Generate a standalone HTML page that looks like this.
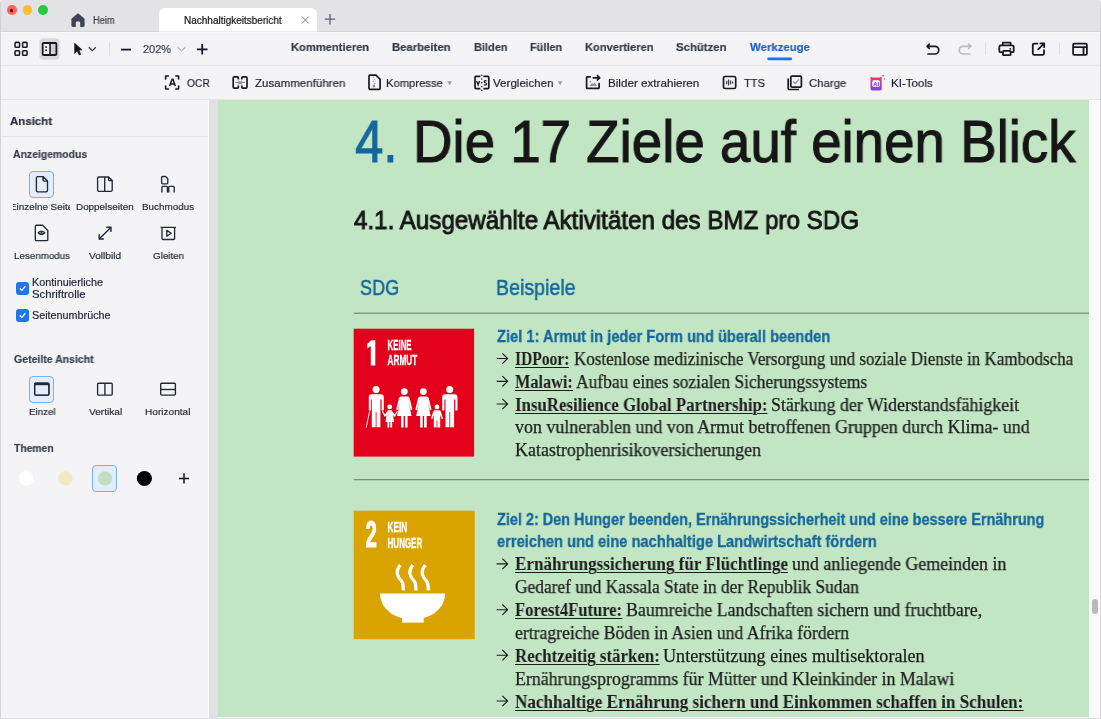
<!DOCTYPE html>
<html><head><meta charset="utf-8">
<style>
*{margin:0;padding:0;box-sizing:border-box}
html,body{width:1101px;height:719px;overflow:hidden;background:#fff}
body{position:relative;font-family:"Liberation Sans",sans-serif;color:#1d2030}
.a{position:absolute}
.t{position:absolute;white-space:nowrap;line-height:1;will-change:transform}
svg{position:absolute;overflow:visible}
</style></head><body>
<!-- window base -->
<div class="a" style="left:0;top:0;width:1101px;height:719px;background:#f4f4f7;border-radius:4px 4px 6px 6px;border:1px solid #d2d2d5;border-top:0"></div>
<!-- title bar -->
<div class="a" style="left:1px;top:0;width:1099px;height:32px;background:#e3e3e6;border-radius:3px 3px 0 0"></div>

<!-- traffic lights -->
<div class="a" style="left:6.9px;top:5.4px;width:9.8px;height:9.8px;border-radius:50%;background:#fe5f57"></div>
<div class="a" style="left:10.3px;top:8.8px;width:3px;height:3px;border-radius:50%;background:#4a0000"></div>
<div class="a" style="left:22.7px;top:5.4px;width:9.8px;height:9.8px;border-radius:50%;background:#febc2e"></div>
<div class="a" style="left:38.3px;top:5.4px;width:9.8px;height:9.8px;border-radius:50%;background:#28c840"></div>
<!-- tabs -->
<svg style="left:70px;top:12px" width="16" height="16" viewBox="0 0 16 16"><path d="M8 1.2 L14.6 6.8 V13.6 Q14.6 15 13.2 15 H10.2 V10.6 Q10.2 9.4 9 9.4 H7 Q5.8 9.4 5.8 10.6 V15 H2.8 Q1.4 15 1.4 13.6 V6.8 Z" fill="#3d4352"/></svg>
<div class="a" style="left:158.5px;top:8px;width:158.5px;height:23.5px;background:#fff;border-radius:6px 6px 0 0"></div>
<div class="a" style="left:1px;top:31.3px;width:1099px;height:1.1px;background:#d6d6da"></div>
<div class="a" style="left:158.5px;top:31.3px;width:158.5px;height:1.1px;background:#ebebed"></div>
<div class="a" style="left:1px;top:32.4px;width:1099px;height:1px;background:#f9f9fb"></div>
<svg style="left:0;top:0" width="1101" height="100" viewBox="0 0 1101 100">
 <path d="M302 16.6 L308.8 23.4 M308.8 16.6 L302 23.4" stroke="#7a7a7a" stroke-width="1"/>
 <path d="M330 14 V24.5 M324.8 19.2 H335.2" stroke="#5b6078" stroke-width="1.3"/>
 <!-- toolbar 1 icons -->
 <g fill="none" stroke="#1a1d29" stroke-width="1.55">
  <rect x="15.08" y="42.38" width="4.45" height="4.95" rx="0.8"/>
  <rect x="22.58" y="42.38" width="4.45" height="4.95" rx="0.8"/>
  <rect x="15.08" y="50.78" width="4.45" height="4.55" rx="0.8"/>
  <rect x="22.58" y="50.78" width="4.45" height="4.55" rx="0.8"/>
 </g>
 <rect x="39.4" y="38.2" width="20.1" height="21.5" rx="4" fill="#d9d9dd"/>
 <rect x="50" y="43" width="6.4" height="12" fill="#d0d0d3"/>
 <rect x="42.7" y="43" width="7" height="12" fill="#f2f2f3"/>
 <rect x="42.7" y="43" width="13.7" height="12" rx="1" fill="none" stroke="#161925" stroke-width="1.8"/>
 <path d="M50 43 V55" stroke="#161925" stroke-width="1.6"/>
 <rect x="45.2" y="46.3" width="1.8" height="1.5" fill="#161925"/>
 <rect x="45.2" y="49.5" width="1.8" height="1.5" fill="#161925"/>
 <path d="M74.6 43.2 L74.6 53.3 L77.1 51 L79.1 55 L80.8 54.2 L78.9 50.3 L82.1 49.8 Z" fill="#141722" stroke="#141722" stroke-width="0.6" stroke-linejoin="round"/>
 <path d="M88.8 47.3 L92.3 50.6 L95.8 47.3" fill="none" stroke="#2f3342" stroke-width="1.3"/>
 <path d="M109.6 42.5 V55.6" stroke="#dcdce0" stroke-width="1"/>
 <path d="M121 49.6 H131" stroke="#161925" stroke-width="1.8"/>
 <path d="M177.6 47.2 L181.5 50.9 L185.4 47.2" fill="none" stroke="#8b8f9a" stroke-width="1"/>
 <path d="M202.2 44 V54.6 M196.9 49.3 H207.5" stroke="#161925" stroke-width="1.8"/>
 <!-- nav underline -->
 <rect x="767.2" y="57.4" width="25" height="2.8" rx="1.4" fill="#1c6ef2"/>
 <!-- right icons -->
 <g fill="none" stroke="#161925" stroke-width="1.7" stroke-linecap="round" stroke-linejoin="round">
  <path d="M929.3 44.2 L927.1 46.3 L929.3 48.5 M927.3 46.3 H934.9 A3.85 3.85 0 0 1 934.9 54 H928"/>
 </g>
 <g fill="none" stroke="#b9bcc3" stroke-width="1.7" stroke-linecap="round" stroke-linejoin="round">
  <path d="M968.7 44.2 L970.9 46.3 L968.7 48.5 M970.7 46.3 H963.1 A3.85 3.85 0 0 0 963.1 54 H970"/>
 </g>
 <path d="M985.5 43 V55" stroke="#e0e0e3" stroke-width="1"/>
 <g fill="none" stroke="#161925" stroke-width="1.8" stroke-linejoin="round">
  <path d="M1002.8 45.3 V42.7 H1010.6 V45.3"/>
  <path d="M1002.4 52.2 H1000.6 Q999.3 52.2 999.3 50.9 V47 Q999.3 45.4 1000.9 45.4 H1012.1 Q1013.7 45.4 1013.7 47 V50.9 Q1013.7 52.2 1012.4 52.2 H1010.8"/>
  <rect x="1003" y="50.9" width="7.6" height="4.3" rx="0.6"/>
 </g>
 <circle cx="1010.2" cy="48.8" r="0.9" fill="#161925"/>
 <g fill="none" stroke="#161925" stroke-width="1.8" stroke-linecap="round" stroke-linejoin="round">
  <path d="M1037.4 43.6 H1034 Q1032.8 43.6 1032.8 44.8 V53.6 Q1032.8 54.8 1034 54.8 H1042.8 Q1044 54.8 1044 53.6 V50.2"/>
  <path d="M1038.2 49.4 L1044.2 43.4 M1040.4 43.4 H1044.2 V47.2"/>
 </g>
 <path d="M1059.5 43 V55" stroke="#e0e0e3" stroke-width="1"/>
 <g fill="none" stroke="#161925" stroke-width="1.8" stroke-linejoin="round">
  <rect x="1073.1" y="43.7" width="13.8" height="11.1" rx="1.3"/>
  <path d="M1073.1 47.2 H1086.9 M1083.5 47.2 V54.8"/>
 </g>
 <!-- toolbar 2 icons -->
 <g fill="none" stroke="#161925" stroke-width="1.6" stroke-linecap="round">
  <path d="M165.6 79 V76.4 Q165.6 76 166 76 H168.4"/>
  <path d="M175.8 76 H178.2 Q178.6 76 178.6 76.4 V79"/>
  <path d="M165.6 86 V88.6 Q165.6 89 166 89 H168.4"/>
  <path d="M175.8 89 H178.2 Q178.6 89 178.6 88.6 V86"/>
 </g>
 <path d="M169.6 86 L172.1 79.3 H172.9 L175.3 86 M170.5 84 H174.4" fill="none" stroke="#161925" stroke-width="1.5"/>
 <g fill="none" stroke="#161925" stroke-width="1.7" stroke-linejoin="round">
  <path d="M238.4 79.6 V78 Q238.4 76.9 237.3 76.9 H234.4 Q233.2 76.9 233.2 78.1 V86.9 Q233.2 88.1 234.4 88.1 H237.3 Q238.4 88.1 238.4 87 V85.4"/>
  <path d="M241.8 79.6 V78 Q241.8 76.9 242.9 76.9 H245.8 Q247 76.9 247 78.1 V86.9 Q247 88.1 245.8 88.1 H242.9 Q241.8 88.1 241.8 87 V85.4"/>
 </g>
 <path d="M235.2 82.5 H245 M238.2 80.6 L240 82.5 L238.2 84.4 M242 80.6 L240.2 82.5 L242 84.4" fill="none" stroke="#8e9099" stroke-width="1.2"/>
 <g fill="none" stroke="#161925" stroke-width="1.7" stroke-linejoin="round">
  <path d="M369 75.2 H376 L380.1 79.3 V88.2 Q380.1 89.3 379 89.3 H370.1 Q369 89.3 369 88.2 V76.3 Q369 75.2 370.1 75.2"/>
 </g>
 <path d="M373.2 76.5 V77.7 M374.4 78.7 V79.9 M373.2 80.9 V82.1 M374.4 83.1 V84.3" stroke="#8e9099" stroke-width="1"/>
 <rect x="372.6" y="84.8" width="2.4" height="2.6" fill="#8e9099"/>
 <path d="M447.2 81.3 H452 L449.6 85.2 Z" fill="#9a9da5"/>
 <path d="M557.8 81.3 H562.6 L560.2 85.2 Z" fill="#9a9da5"/>
 <g fill="none" stroke="#161925" stroke-width="1.7" stroke-linejoin="round">
  <path d="M480.4 76.4 H476 Q475 76.4 475 77.4 V87.6 Q475 88.6 476 88.6 H480.4"/>
  <path d="M483.4 76.4 H487.8 Q488.8 76.4 488.8 77.4 V87.6 Q488.8 88.6 487.8 88.6 H483.4"/>
 </g>
 <path d="M481.8 75.2 V90.6" stroke="#161925" stroke-width="1.5" stroke-linecap="round" stroke-dasharray="0.01 3.75"/>
 <path d="M476.6 81 L478.1 84.9 L479.6 81" fill="none" stroke="#161925" stroke-width="1.3"/>
 <path d="M486.4 81.3 Q486 80.6 485.2 80.6 Q484.2 80.6 484.2 81.6 Q484.2 82.4 485.3 82.8 Q486.5 83.2 486.5 84.1 Q486.5 85.2 485.3 85.2 Q484.4 85.2 484 84.5" fill="none" stroke="#161925" stroke-width="1.2"/>
 <g fill="none" stroke="#161925" stroke-width="1.7" stroke-linecap="round" stroke-linejoin="round">
  <path d="M590.3 76.8 H587.3 Q586.6 76.8 586.6 77.5 V87.7 Q586.6 88.4 587.3 88.4 H598.4 Q599.1 88.4 599.1 87.7 V83.6"/>
  <path d="M593.3 77.8 H599.6 M597.4 75.6 L599.7 77.8 L597.4 80"/>
 </g>
 <path d="M589.5 86 L592 83 L593.4 84.3 L594.7 82.2 L597 86 Z" fill="#8e9099"/>
 <circle cx="590.2" cy="81.6" r="0.8" fill="#8e9099"/>
 <rect x="723.5" y="76.5" width="12.2" height="12" rx="1.6" fill="none" stroke="#161925" stroke-width="1.7"/>
 <path d="M726.8 80.8 V84.2 M728.6 79.6 V85.6 M730.6 80.6 V84.4 M732.6 81.6 V83.6" stroke="#3a3d48" stroke-width="1.2"/>
 <g fill="none" stroke="#161925" stroke-width="1.7" stroke-linejoin="round">
  <path d="M788.2 78.6 V88.4 Q788.2 89.5 789.3 89.5 H799.1"/>
  <rect x="790.8" y="76.1" width="10.6" height="11" rx="1.2"/>
 </g>
 <path d="M793.2 81.5 L795.2 83.6 L799 79.4" fill="none" stroke="#8e9099" stroke-width="1.2"/>
 <defs><linearGradient id="aig" x1="0" y1="0" x2="0" y2="1"><stop offset="0" stop-color="#f43a56"/><stop offset="1" stop-color="#7a3ff6"/></linearGradient></defs>
 <path d="M870.5 77.4 Q870.5 76.8 871.2 76.8 L872.6 77.6 H879.6 L881 76.8 Q881.7 76.8 881.7 77.4 V88.8 Q881.7 90.6 879.9 90.6 H872.3 Q870.5 90.6 870.5 88.8 Z" fill="url(#aig)"/>
 <rect x="872.3" y="80.2" width="7.6" height="6.6" rx="1.6" fill="#fff"/>
 <text x="873" y="85.8" font-family="Liberation Sans" font-weight="700" font-size="5.6" fill="#5a2fd4" textLength="6.2" lengthAdjust="spacingAndGlyphs">AI</text>
 <circle cx="883.2" cy="75.6" r="0.9" fill="#f2456a"/>
 <circle cx="884.4" cy="78.9" r="0.6" fill="#8a54f0"/>
</svg>

<!-- toolbar borders -->
<div class="a" style="left:1px;top:65px;width:1099px;height:1px;background:#e6e6ea"></div>
<div class="a" style="left:1px;top:98.8px;width:1099px;height:1px;background:#e4e4e8"></div>

<!-- sidebar -->
<div class="a" style="left:1px;top:99.8px;width:208px;height:618px;background:#f4f4f7"></div>
<div class="a" style="left:208px;top:99.8px;width:1px;height:618px;background:#fbfbfd"></div>
<div class="a" style="left:1px;top:136px;width:207px;height:1px;background:#e3e3e7"></div>
<div class="a" style="left:29.1px;top:170.9px;width:25.1px;height:26.7px;border-radius:4px;background:#e3eefc;border:1.4px solid #74b1f7"></div>
<div class="a" style="left:29.2px;top:376px;width:25.1px;height:26.5px;border-radius:4px;background:#e3eefc;border:1.4px solid #74b1f7"></div>
<div class="a" style="left:92.3px;top:465px;width:25.2px;height:26.7px;border-radius:4px;background:#e3eefc;border:1.4px solid #74b1f7"></div>
<!-- checkboxes -->
<div class="a" style="left:16.3px;top:281.8px;width:12.6px;height:13.2px;border-radius:3px;background:#1f75ee"></div>
<div class="a" style="left:16.3px;top:308.6px;width:12.6px;height:13.4px;border-radius:3px;background:#1f75ee"></div>
<svg style="left:0;top:99px" width="209" height="619" viewBox="0 99 209 619">
 <path d="M20.1 288.6 L21.9 290.4 L25.1 286.6 M20.1 315.5 L21.9 317.3 L25.1 313.5" fill="none" stroke="#fff" stroke-width="1.25" stroke-linecap="round" stroke-linejoin="round"/>
 <g fill="none" stroke="#242836" stroke-width="1.35" stroke-linejoin="round">
  <!-- single page -->
  <path d="M37.7 176.6 H43 L47.5 181.1 V190.6 Q47.5 191.9 46.2 191.9 H37.7 Q36.4 191.9 36.4 190.6 V177.9 Q36.4 176.6 37.7 176.6 Z M43 176.6 V179.8 Q43 181.1 44.3 181.1 H47.5"/>
  <!-- double page -->
  <path d="M98.9 177 H108.6 L112.2 180.6 V190 Q112.2 191.3 110.9 191.3 H98.9 Q97.6 191.3 97.6 190 V178.3 Q97.6 177 98.9 177 Z M104.7 177 V191.3 M108.6 177 V179.4 Q108.6 180.6 109.8 180.6 H112.2"/>
  <!-- book mode -->
  <path d="M162.6 176.5 H165.6 L167.8 178.7 V182.8 Q167.8 183.8 166.8 183.8 H162.6 Q161.6 183.8 161.6 182.8 V177.5 Q161.6 176.5 162.6 176.5 Z"/>
  <path d="M161.9 192.6 V187.2 Q161.9 186.3 162.8 186.3 H166.5 Q167.4 186.3 167.4 187.2 V192.6 M168.7 192.6 V187.2 Q168.7 186.3 169.6 186.3 H173.3 Q174.2 186.3 174.2 187.2 V192.6"/>
  <!-- reading mode -->
  <path d="M36.5 225.2 H42.6 L47.8 230.4 V239.4 Q47.8 240.6 46.6 240.6 H36.5 Q35.3 240.6 35.3 239.4 V226.4 Q35.3 225.2 36.5 225.2 Z"/>
  <path d="M38.2 232.8 Q41.5 229.4 44.8 232.8 Q41.5 236.2 38.2 232.8 Z"/>
  <!-- full screen -->
  <path d="M99.4 238.8 L110.8 227.4 M99.2 234.8 V239 H103.4 M106.8 227.2 H111 V231.4" stroke-width="1.4" stroke-linecap="round"/>
  <!-- slide -->
  <path d="M160.6 227.3 H176 M162 227.3 V238.4 Q162 239.5 163.1 239.5 H173.5 Q174.6 239.5 174.6 238.4 V227.3"/>
  <path d="M166.8 230.4 V236.2 L171.2 233.3 Z"/>
  <!-- split: single -->
  <rect x="34.7" y="383.2" width="14.2" height="11.9" rx="1"/>
  <path d="M34.7 384.6 H48.9" stroke-width="2.2"/>
  <!-- split vertical -->
  <rect x="97.6" y="383.2" width="14.6" height="11.9" rx="1"/>
  <path d="M104.9 383.2 V395.1"/>
  <!-- split horizontal -->
  <rect x="160.7" y="383.2" width="14.7" height="11.9" rx="1"/>
  <path d="M160.7 389.5 H175.4"/>
 </g>
 <circle cx="41.5" cy="232.8" r="1.1" fill="#242836"/>
 <rect x="35.4" y="384.4" width="12.8" height="10" fill="#e3eefc" />
 <path d="M34.7 384.2 H48.9" stroke="#242836" stroke-width="2"/>
 <rect x="34.7" y="383.2" width="14.2" height="11.9" rx="1" fill="none" stroke="#242836" stroke-width="1.35"/>
 <!-- themes -->
 <circle cx="26.1" cy="478.5" r="7.2" fill="#ffffff"/>
 <circle cx="65.4" cy="478.5" r="7.2" fill="#f2e8c4"/>
 <circle cx="105.1" cy="478.5" r="7.2" fill="#c4ddc2"/>
 <circle cx="144.4" cy="478.5" r="7.6" fill="#000"/>
 <path d="M184 473.4 V483.6 M178.9 478.5 H189.1" stroke="#111" stroke-width="1.5"/>
</svg>
<div class="a" style="left:13px;top:200px;width:57px;height:14px;overflow:hidden"><div class="t" style="left:-3.2px;top:1.6px;font-size:9.9px;color:#2a2e38;-webkit-text-stroke:0.2px #2a2e38">Einzelne Seite</div></div>

<!-- page area -->
<div class="a" style="left:209px;top:99.8px;width:9px;height:618px;background:#e1e1e4"></div>
<div class="a" style="left:218px;top:99.8px;width:871px;height:617.7px;background:#c2e5c4"></div>
<div class="a" style="left:1089px;top:99.8px;width:11px;height:618px;background:#fafafb"></div>
<div class="a" style="left:1100px;top:99.8px;width:1px;height:618px;background:#dadadc"></div>
<div class="a" style="left:1091.8px;top:598.8px;width:6px;height:15px;border-radius:3px;background:#b9b9bb"></div>
<div class="a" style="left:0;top:717.5px;width:1101px;height:1.5px;background:#e0e0e2"></div>
<div class="a" style="left:0;top:99px;width:1px;height:619px;background:#d4d4d6"></div>

<!-- document graphics -->
<svg style="left:0;top:0" width="1101" height="719" viewBox="0 0 1101 719">
 <rect x="353.8" y="312.6" width="735.2" height="1.3" fill="#7d8d85"/>
 <rect x="353.8" y="479" width="735.2" height="1.3" fill="#7d8d85"/>
 <rect x="353.7" y="328.7" width="120.4" height="127.9" fill="#e3001b"/>
 <rect x="353.7" y="510.7" width="121" height="128.5" fill="#d9a300"/>
 <g fill="#fff" font-family="Liberation Sans" font-weight="700" stroke="#fff" stroke-width="0.35">
  
  <text x="387.6" y="350.3" font-size="14.6" textLength="24" lengthAdjust="spacingAndGlyphs">KEINE</text>
  <text x="387.6" y="364.8" font-size="14.6" textLength="29.6" lengthAdjust="spacingAndGlyphs">ARMUT</text>
  <text x="365.4" y="547.4" font-size="36" textLength="11.4" lengthAdjust="spacingAndGlyphs" stroke="#fff" stroke-width="0.9">2</text>
  <text x="387.6" y="532.3" font-size="14.6" textLength="19.6" lengthAdjust="spacingAndGlyphs">KEIN</text>
  <text x="387.6" y="547.8" font-size="14.6" textLength="34.6" lengthAdjust="spacingAndGlyphs">HUNGER</text>
 </g>
 <path d="M367.2 344 L371.2 340.2 H375.3 V365.4 H370.8 V346 L367.2 348.4 Z" fill="#fff"/>
 <!-- SDG1 people -->
 <g transform="translate(362 380)" fill="#fff">
  <circle cx="14.1" cy="9.6" r="3.5"/>
  <path d="M9.2 14.3 H19 Q21.8 14.3 21.8 17.2 V30.4 H19.6 V19.6 H18.4 V47.2 H14.5 V32 H13.7 V47.2 H9.8 V19.6 H8.9 V30.4 H6.8 V17.2 Q6.8 14.3 9.2 14.3 Z"/>
  <path d="M7.6 31 L4.2 47.6" stroke="#fff" stroke-width="0.9"/>
  <circle cx="27.7" cy="26.9" r="2.4"/>
  <path d="M25.9 30.2 H29.5 L32.6 34.5 L34.8 31 L35.8 31.6 L32.8 37 L31.2 35 L32 42 H30.2 V47.5 H28.3 V42 H27.3 V47.5 H25.4 V42 H23.6 L24.4 35 L22.8 37 L19.8 31.6 L20.8 31 L23 34.5 Z"/>
  <circle cx="42.3" cy="11.6" r="3.4"/>
  <path d="M39 16.4 H45.6 Q47 16.4 47.6 18 L50.4 29.6 L48.8 30.2 L46.4 21.6 L49.6 36 H45.6 V47.5 H43 V36 H41.6 V47.5 H39 V36 H35 L38.2 21.6 L35.8 30.2 L34.2 29.6 L37 18 Q37.6 16.4 39 16.4 Z"/>
  <g transform="translate(19.1 0)"><circle cx="42.3" cy="11.6" r="3.4"/>
  <path d="M39 16.4 H45.6 Q47 16.4 47.6 18 L50.4 29.6 L48.8 30.2 L46.4 21.6 L49.6 36 H45.6 V47.5 H43 V36 H41.6 V47.5 H39 V36 H35 L38.2 21.6 L35.8 30.2 L34.2 29.6 L37 18 Q37.6 16.4 39 16.4 Z"/></g>
  <circle cx="75" cy="26.9" r="2.4"/>
  <path d="M73 30.3 H77 Q78.2 30.3 78.8 31.6 L81 38.8 L79.8 39.3 L78.2 35 V47.5 H75.4 V40.6 H74.6 V47.5 H71.8 V35 L70.2 39.3 L69 38.8 L71.2 31.6 Q71.8 30.3 73 30.3 Z"/>
  <circle cx="87.7" cy="9.6" r="3.5"/>
  <path d="M82.8 14.3 H92.6 Q95.5 14.3 95.5 17.2 V30.4 H93.3 V19.6 H92.1 V47.2 H88.2 V32 H87.4 V47.2 H83.5 V19.6 H82.4 V30.4 H80.2 V17.2 Q80.2 14.3 82.8 14.3 Z"/>
 </g>
 <!-- SDG2 bowl -->
 <g fill="none" stroke="#fff" stroke-width="3.3" stroke-linecap="butt">
  <path d="M400.3 565.2 Q396.6 569.5 397.4 574 Q398.2 577.6 401.2 580.6 Q403.6 583.8 403.2 590.4"/>
  <path d="M412.9 565.2 Q409.2 569.5 410 574 Q410.8 577.6 413.8 580.6 Q416.2 583.8 415.8 590.4"/>
  <path d="M425.3 565.2 Q421.6 569.5 422.4 574 Q423.2 577.6 426.2 580.6 Q428.6 583.8 428.2 590.4"/>
 </g>
 <path d="M379.9 593.6 H445.2 Q444.8 606 434 613.6 Q425.5 619.2 412.6 619.4 Q399.5 619.2 391.2 613.6 Q380.3 606 379.9 593.6 Z" fill="#fff"/>
 <rect x="402" y="618" width="21.7" height="4.6" fill="#fff"/>
 <!-- arrows -->
 <g fill="none" stroke="#1b1b1b" stroke-width="1.15">
  <path d="M496.6 358.5 H507.6 M502.4 353.3 L507.6 358.5 L502.4 363.7"/>
  <path d="M496.6 381.3 H507.6 M502.4 376.1 L507.6 381.3 L502.4 386.5"/>
  <path d="M496.6 404 H507.6 M502.4 398.8 L507.6 404 L502.4 409.2"/>
  <path d="M496.6 563.9 H507.6 M502.4 558.7 L507.6 563.9 L502.4 569.1"/>
  <path d="M496.6 609.7 H507.6 M502.4 604.5 L507.6 609.7 L502.4 614.9"/>
  <path d="M496.6 655.2 H507.6 M502.4 650 L507.6 655.2 L502.4 660.4"/>
  <path d="M496.6 701 H507.6 M502.4 695.8 L507.6 701 L502.4 706.2"/>
 </g>
</svg>
<div class="t" style="left:92.5px;top:15.60px;font-family:'Liberation Sans',sans-serif;font-size:10px;font-weight:400;color:#3a3f4e;transform:scaleX(0.9253);transform-origin:0 0;-webkit-text-stroke:0.2px #3a3f4e;">Heim</div>
<div class="t" style="left:184px;top:15.60px;font-family:'Liberation Sans',sans-serif;font-size:10px;font-weight:400;color:#111;transform:scaleX(0.9977);transform-origin:0 0;-webkit-text-stroke:0.2px #111;">Nachhaltigkeitsbericht</div>
<div class="t" style="left:143px;top:44.40px;font-family:'Liberation Sans',sans-serif;font-size:11px;font-weight:400;color:#3a3f4f;transform:scaleX(0.9950);transform-origin:0 0;-webkit-text-stroke:0.2px #3a3f4f;">202%</div>
<div class="t" style="left:291.3px;top:40.80px;font-family:'Liberation Sans',sans-serif;font-size:11.6px;font-weight:700;color:#343948;transform:scaleX(0.9620);transform-origin:0 0;-webkit-text-stroke:0.2px #343948;">Kommentieren</div>
<div class="t" style="left:392.3px;top:40.80px;font-family:'Liberation Sans',sans-serif;font-size:11.6px;font-weight:700;color:#343948;transform:scaleX(0.9763);transform-origin:0 0;-webkit-text-stroke:0.2px #343948;">Bearbeiten</div>
<div class="t" style="left:473.6px;top:40.80px;font-family:'Liberation Sans',sans-serif;font-size:11.6px;font-weight:700;color:#343948;transform:scaleX(0.9481);transform-origin:0 0;-webkit-text-stroke:0.2px #343948;">Bilden</div>
<div class="t" style="left:529.9px;top:40.80px;font-family:'Liberation Sans',sans-serif;font-size:11.6px;font-weight:700;color:#343948;transform:scaleX(0.9432);transform-origin:0 0;-webkit-text-stroke:0.2px #343948;">Füllen</div>
<div class="t" style="left:585px;top:40.80px;font-family:'Liberation Sans',sans-serif;font-size:11.6px;font-weight:700;color:#343948;transform:scaleX(0.9578);transform-origin:0 0;-webkit-text-stroke:0.2px #343948;">Konvertieren</div>
<div class="t" style="left:676.3px;top:40.80px;font-family:'Liberation Sans',sans-serif;font-size:11.6px;font-weight:700;color:#343948;transform:scaleX(0.9797);transform-origin:0 0;-webkit-text-stroke:0.2px #343948;">Schützen</div>
<div class="t" style="left:750px;top:40.80px;font-family:'Liberation Sans',sans-serif;font-size:11.6px;font-weight:700;color:#1f5fcc;transform:scaleX(0.9820);transform-origin:0 0;-webkit-text-stroke:0.2px #1f5fcc;">Werkzeuge</div>
<div class="t" style="left:186.9px;top:76.80px;font-family:'Liberation Sans',sans-serif;font-size:11.6px;font-weight:400;color:#1d2030;transform:scaleX(0.8849);transform-origin:0 0;-webkit-text-stroke:0.2px #1d2030;">OCR</div>
<div class="t" style="left:254.5px;top:76.80px;font-family:'Liberation Sans',sans-serif;font-size:11.6px;font-weight:400;color:#1d2030;transform:scaleX(0.9938);transform-origin:0 0;-webkit-text-stroke:0.2px #1d2030;">Zusammenführen</div>
<div class="t" style="left:385.9px;top:76.80px;font-family:'Liberation Sans',sans-serif;font-size:11.6px;font-weight:400;color:#1d2030;transform:scaleX(0.9686);transform-origin:0 0;-webkit-text-stroke:0.2px #1d2030;">Kompresse</div>
<div class="t" style="left:493.2px;top:76.80px;font-family:'Liberation Sans',sans-serif;font-size:11.6px;font-weight:400;color:#1d2030;transform:scaleX(0.9968);transform-origin:0 0;-webkit-text-stroke:0.2px #1d2030;">Vergleichen</div>
<div class="t" style="left:608px;top:76.80px;font-family:'Liberation Sans',sans-serif;font-size:11.6px;font-weight:400;color:#1d2030;transform:scaleX(1.0047);transform-origin:0 0;-webkit-text-stroke:0.2px #1d2030;">Bilder extrahieren</div>
<div class="t" style="left:743.8px;top:76.80px;font-family:'Liberation Sans',sans-serif;font-size:11.6px;font-weight:400;color:#1d2030;transform:scaleX(0.9541);transform-origin:0 0;-webkit-text-stroke:0.2px #1d2030;">TTS</div>
<div class="t" style="left:809px;top:76.80px;font-family:'Liberation Sans',sans-serif;font-size:11.6px;font-weight:400;color:#1d2030;transform:scaleX(0.9808);transform-origin:0 0;-webkit-text-stroke:0.2px #1d2030;">Charge</div>
<div class="t" style="left:891.3px;top:76.80px;font-family:'Liberation Sans',sans-serif;font-size:11.6px;font-weight:400;color:#1d2030;transform:scaleX(0.9954);transform-origin:0 0;-webkit-text-stroke:0.2px #1d2030;">KI-Tools</div>
<div class="t" style="left:10.4px;top:115.00px;font-family:'Liberation Sans',sans-serif;font-size:11.6px;font-weight:700;color:#2a2e3b;transform:scaleX(0.9879);transform-origin:0 0;-webkit-text-stroke:0.2px #2a2e3b;">Ansicht</div>
<div class="t" style="left:13.4px;top:149.00px;font-family:'Liberation Sans',sans-serif;font-size:10.6px;font-weight:700;color:#3a3f50;transform:scaleX(0.9848);transform-origin:0 0;-webkit-text-stroke:0.2px #3a3f50;">Anzeigemodus</div>
<div class="t" style="left:76.3px;top:202.00px;font-family:'Liberation Sans',sans-serif;font-size:9.9px;font-weight:400;color:#2a2e38;-webkit-text-stroke:0.2px #2a2e38;">Doppelseiten</div>
<div class="t" style="left:142px;top:202.00px;font-family:'Liberation Sans',sans-serif;font-size:9.9px;font-weight:400;color:#2a2e38;transform:scaleX(0.9970);transform-origin:0 0;-webkit-text-stroke:0.2px #2a2e38;">Buchmodus</div>
<div class="t" style="left:13.6px;top:251.00px;font-family:'Liberation Sans',sans-serif;font-size:9.9px;font-weight:400;color:#2a2e38;transform:scaleX(0.9903);transform-origin:0 0;-webkit-text-stroke:0.2px #2a2e38;">Lesenmodus</div>
<div class="t" style="left:89px;top:251.00px;font-family:'Liberation Sans',sans-serif;font-size:9.9px;font-weight:400;color:#2a2e38;transform:scaleX(1.0225);transform-origin:0 0;-webkit-text-stroke:0.2px #2a2e38;">Vollbild</div>
<div class="t" style="left:152.6px;top:251.00px;font-family:'Liberation Sans',sans-serif;font-size:9.9px;font-weight:400;color:#2a2e38;transform:scaleX(0.9905);transform-origin:0 0;-webkit-text-stroke:0.2px #2a2e38;">Gleiten</div>
<div class="t" style="left:32.4px;top:277.10px;font-family:'Liberation Sans',sans-serif;font-size:10.8px;font-weight:400;color:#23273a;transform:scaleX(1.0024);transform-origin:0 0;-webkit-text-stroke:0.2px #23273a;">Kontinuierliche</div>
<div class="t" style="left:32.4px;top:289.40px;font-family:'Liberation Sans',sans-serif;font-size:10.8px;font-weight:400;color:#23273a;transform:scaleX(1.0487);transform-origin:0 0;-webkit-text-stroke:0.2px #23273a;">Schriftrolle</div>
<div class="t" style="left:32.4px;top:309.80px;font-family:'Liberation Sans',sans-serif;font-size:10.8px;font-weight:400;color:#23273a;-webkit-text-stroke:0.2px #23273a;">Seitenumbrüche</div>
<div class="t" style="left:13.8px;top:353.90px;font-family:'Liberation Sans',sans-serif;font-size:10.6px;font-weight:700;color:#3a3f50;transform:scaleX(0.9917);transform-origin:0 0;-webkit-text-stroke:0.2px #3a3f50;">Geteilte Ansicht</div>
<div class="t" style="left:28.5px;top:407.20px;font-family:'Liberation Sans',sans-serif;font-size:9.9px;font-weight:400;color:#2a2e38;transform:scaleX(0.9849);transform-origin:0 0;-webkit-text-stroke:0.2px #2a2e38;">Einzel</div>
<div class="t" style="left:88.5px;top:407.20px;font-family:'Liberation Sans',sans-serif;font-size:9.9px;font-weight:400;color:#2a2e38;transform:scaleX(1.0250);transform-origin:0 0;-webkit-text-stroke:0.2px #2a2e38;">Vertikal</div>
<div class="t" style="left:145.3px;top:407.20px;font-family:'Liberation Sans',sans-serif;font-size:9.9px;font-weight:400;color:#2a2e38;transform:scaleX(1.0209);transform-origin:0 0;-webkit-text-stroke:0.2px #2a2e38;">Horizontal</div>
<div class="t" style="left:13.8px;top:443.00px;font-family:'Liberation Sans',sans-serif;font-size:10.6px;font-weight:700;color:#3a3f50;transform:scaleX(0.9748);transform-origin:0 0;-webkit-text-stroke:0.2px #3a3f50;">Themen</div>
<div class="t" style="left:355px;top:112.20px;font-family:'Liberation Sans',sans-serif;font-size:60px;font-weight:400;color:#15679b;transform:scaleX(0.8512);transform-origin:0 0;-webkit-text-stroke:1.1px #15679b;">4.</div>
<div class="t" style="left:413.4px;top:112.20px;font-family:'Liberation Sans',sans-serif;font-size:60px;font-weight:400;color:#161616;transform:scaleX(0.9113);transform-origin:0 0;-webkit-text-stroke:1.1px #161616;">Die 17 Ziele auf einen Blick</div>
<div class="t" style="left:354.4px;top:207.10px;font-family:'Liberation Sans',sans-serif;font-size:26.2px;font-weight:400;color:#161616;transform:scaleX(0.9227);transform-origin:0 0;-webkit-text-stroke:0.9px #161616;">4.1. Ausgewählte Aktivitäten des BMZ pro SDG</div>
<div class="t" style="left:359.6px;top:276.10px;font-family:'Liberation Sans',sans-serif;font-size:22.8px;font-weight:400;color:#15679b;transform:scaleX(0.7934);transform-origin:0 0;-webkit-text-stroke:0.5px #15679b;">SDG</div>
<div class="t" style="left:495.5px;top:276.10px;font-family:'Liberation Sans',sans-serif;font-size:22.8px;font-weight:400;color:#15679b;transform:scaleX(0.8604);transform-origin:0 0;-webkit-text-stroke:0.5px #15679b;">Beispiele</div>
<div class="t" style="left:496.8px;top:328.80px;font-family:'Liberation Sans',sans-serif;font-size:16.6px;font-weight:700;color:#15679b;transform:scaleX(0.8831);transform-origin:0 0;-webkit-text-stroke:0.3px #15679b;">Ziel 1: Armut in jeder Form und überall beenden</div>
<div class="t" style="left:514.6px;top:350.00px;font-family:'Liberation Serif',serif;font-size:18px;font-weight:700;color:#1b1b1b;transform:scaleX(0.8637);transform-origin:0 0;"><span style="text-decoration:underline;text-decoration-thickness:1.1px;text-underline-offset:2.2px">IDPoor:</span></div>
<div class="t" style="left:573.8px;top:350.00px;font-family:'Liberation Serif',serif;font-size:18px;font-weight:400;color:#1b1b1b;transform:scaleX(0.9441);transform-origin:0 0;-webkit-text-stroke:0.25px #1b1b1b;">Kostenlose medizinische Versorgung und soziale Dienste in Kambodscha</div>
<div class="t" style="left:514.6px;top:372.80px;font-family:'Liberation Serif',serif;font-size:18px;font-weight:700;color:#1b1b1b;transform:scaleX(0.9033);transform-origin:0 0;"><span style="text-decoration:underline;text-decoration-thickness:1.1px;text-underline-offset:2.2px">Malawi:</span></div>
<div class="t" style="left:576.2px;top:372.80px;font-family:'Liberation Serif',serif;font-size:18px;font-weight:400;color:#1b1b1b;transform:scaleX(0.9689);transform-origin:0 0;-webkit-text-stroke:0.25px #1b1b1b;">Aufbau eines sozialen Sicherungssystems</div>
<div class="t" style="left:514.6px;top:395.50px;font-family:'Liberation Serif',serif;font-size:18px;font-weight:700;color:#1b1b1b;transform:scaleX(0.9351);transform-origin:0 0;"><span style="text-decoration:underline;text-decoration-thickness:1.1px;text-underline-offset:2.2px">InsuResilience Global Partnership:</span></div>
<div class="t" style="left:770.9px;top:395.50px;font-family:'Liberation Serif',serif;font-size:18px;font-weight:400;color:#1b1b1b;transform:scaleX(0.9924);transform-origin:0 0;-webkit-text-stroke:0.25px #1b1b1b;">Stärkung der Widerstandsfähigkeit</div>
<div class="t" style="left:514.6px;top:418.30px;font-family:'Liberation Serif',serif;font-size:18px;font-weight:400;color:#1b1b1b;transform:scaleX(0.9955);transform-origin:0 0;-webkit-text-stroke:0.25px #1b1b1b;">von vulnerablen und von Armut betroffenen Gruppen durch Klima- und</div>
<div class="t" style="left:514.6px;top:441.00px;font-family:'Liberation Serif',serif;font-size:18px;font-weight:400;color:#1b1b1b;transform:scaleX(0.9963);transform-origin:0 0;-webkit-text-stroke:0.25px #1b1b1b;">Katastrophenrisikoversicherungen</div>
<div class="t" style="left:496.8px;top:511.80px;font-family:'Liberation Sans',sans-serif;font-size:16.6px;font-weight:700;color:#15679b;transform:scaleX(0.8703);transform-origin:0 0;-webkit-text-stroke:0.3px #15679b;">Ziel 2: Den Hunger beenden, Ernährungssicherheit und eine bessere Ernährung</div>
<div class="t" style="left:496.8px;top:534.30px;font-family:'Liberation Sans',sans-serif;font-size:16.6px;font-weight:700;color:#15679b;transform:scaleX(0.8839);transform-origin:0 0;-webkit-text-stroke:0.3px #15679b;">erreichen und eine nachhaltige Landwirtschaft fördern</div>
<div class="t" style="left:514.6px;top:555.40px;font-family:'Liberation Serif',serif;font-size:18px;font-weight:700;color:#1b1b1b;transform:scaleX(0.9488);transform-origin:0 0;"><span style="text-decoration:underline;text-decoration-thickness:1.1px;text-underline-offset:2.2px">Ernährungssicherung für Flüchtlinge</span></div>
<div class="t" style="left:791.6px;top:555.40px;font-family:'Liberation Serif',serif;font-size:18px;font-weight:400;color:#1b1b1b;transform:scaleX(0.9947);transform-origin:0 0;-webkit-text-stroke:0.25px #1b1b1b;">und anliegende Gemeinden in</div>
<div class="t" style="left:514.6px;top:578.40px;font-family:'Liberation Serif',serif;font-size:18px;font-weight:400;color:#1b1b1b;transform:scaleX(0.9646);transform-origin:0 0;-webkit-text-stroke:0.25px #1b1b1b;">Gedaref und Kassala State in der Republik Sudan</div>
<div class="t" style="left:514.6px;top:601.20px;font-family:'Liberation Serif',serif;font-size:18px;font-weight:700;color:#1b1b1b;transform:scaleX(0.9208);transform-origin:0 0;"><span style="text-decoration:underline;text-decoration-thickness:1.1px;text-underline-offset:2.2px">Forest4Future:</span></div>
<div class="t" style="left:626px;top:601.20px;font-family:'Liberation Serif',serif;font-size:18px;font-weight:400;color:#1b1b1b;transform:scaleX(0.9913);transform-origin:0 0;-webkit-text-stroke:0.25px #1b1b1b;">Baumreiche Landschaften sichern und fruchtbare,</div>
<div class="t" style="left:514.6px;top:623.90px;font-family:'Liberation Serif',serif;font-size:18px;font-weight:400;color:#1b1b1b;transform:scaleX(0.9798);transform-origin:0 0;-webkit-text-stroke:0.25px #1b1b1b;">ertragreiche Böden in Asien und Afrika fördern</div>
<div class="t" style="left:514.6px;top:646.70px;font-family:'Liberation Serif',serif;font-size:18px;font-weight:700;color:#1b1b1b;transform:scaleX(0.9375);transform-origin:0 0;"><span style="text-decoration:underline;text-decoration-thickness:1.1px;text-underline-offset:2.2px">Rechtzeitig stärken:</span></div>
<div class="t" style="left:663.1px;top:646.70px;font-family:'Liberation Serif',serif;font-size:18px;font-weight:400;color:#1b1b1b;transform:scaleX(1.0064);transform-origin:0 0;-webkit-text-stroke:0.25px #1b1b1b;">Unterstützung eines multisektoralen</div>
<div class="t" style="left:514.6px;top:669.60px;font-family:'Liberation Serif',serif;font-size:18px;font-weight:400;color:#1b1b1b;transform:scaleX(0.9894);transform-origin:0 0;-webkit-text-stroke:0.25px #1b1b1b;">Ernährungsprogramms für Mütter und Kleinkinder in Malawi</div>
<div class="t" style="left:514.6px;top:692.50px;font-family:'Liberation Serif',serif;font-size:18px;font-weight:700;color:#1b1b1b;transform:scaleX(0.9492);transform-origin:0 0;"><span style="text-decoration:underline;text-decoration-thickness:1.1px;text-underline-offset:2.2px">Nachhaltige Ernährung sichern und Einkommen schaffen in Schulen:</span></div>
</body></html>
